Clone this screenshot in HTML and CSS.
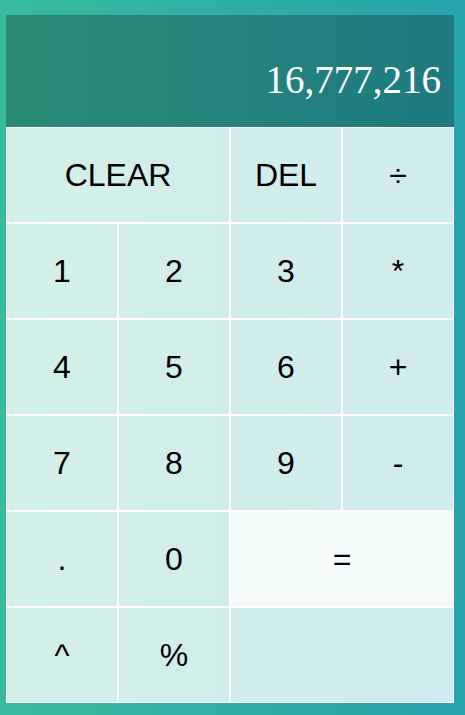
FILE: index.html
```html
<!DOCTYPE html>
<html>
<head>
<meta charset="utf-8">
<link rel="stylesheet" href="styles.css">
</head>
<body>
<div class="page">
  <div class="calculator">
    <div class="output">
      <div class="current">16,777,216</div>
    </div>
    <button class="key span-two">CLEAR</button>
    <button class="key">DEL</button>
    <button class="key">÷</button>
    <button class="key">1</button>
    <button class="key">2</button>
    <button class="key">3</button>
    <button class="key">*</button>
    <button class="key">4</button>
    <button class="key">5</button>
    <button class="key">6</button>
    <button class="key">+</button>
    <button class="key">7</button>
    <button class="key">8</button>
    <button class="key">9</button>
    <button class="key">-</button>
    <button class="key">.</button>
    <button class="key">0</button>
    <button class="key span-two equals">=</button>
    <button class="key">^</button>
    <button class="key">%</button>
    <button class="key span-two"></button>
  </div>
</div>
</body>
</html>
```
FILE: styles.css
```css
* {
  box-sizing: border-box;
}

html, body {
  margin: 0;
  padding: 0;
}

body {
  min-height: 715px;
  background: linear-gradient(to right, #39bb9d, #26a3ac);
}

.page {
  padding: 15px 11px 12px 6px;
}

.calculator {
  display: grid;
  grid-template-columns: repeat(4, 112px);
  grid-template-rows: 112px repeat(6, 96px);
}

.output {
  grid-column: 1 / -1;
  background: rgba(0, 0, 0, 0.25);
  display: flex;
  align-items: flex-end;
  justify-content: flex-end;
  padding: 0 13px 25px;
}

.current {
  color: #fff;
  font-family: "Liberation Serif", serif;
  font-size: 39px;
}

.key {
  margin: 0;
  padding: 0;
  border: 1px solid #fff;
  outline: none;
  background: rgba(255, 255, 255, 0.78);
  color: #000;
  font-family: "Liberation Sans", Arial, sans-serif;
  font-size: 32px;
  cursor: pointer;
}

.span-two {
  grid-column: span 2;
}

.equals {
  background: rgba(255, 255, 255, 0.94);
}
```
